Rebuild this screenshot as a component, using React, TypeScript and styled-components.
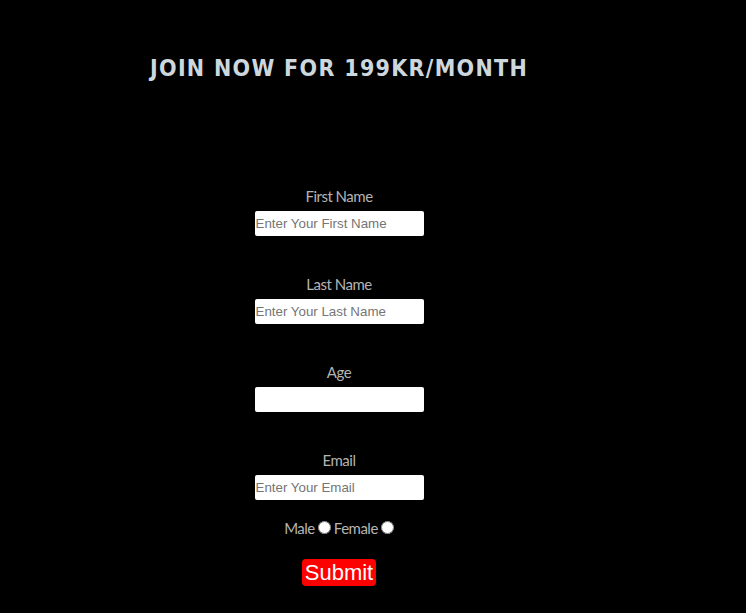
import styled, { createGlobalStyle } from "styled-components";

const GlobalStyle = createGlobalStyle`
    html, body {
        margin: 0;
        padding: 0;
        background: #000;
    }
    body {
        min-height: 613px;
        font-family: "Lato", "Roboto", sans-serif;
    }
`;

const Page = styled.div`
    width: 662px;
    margin-left: 8px;
    padding-top: 52px;
`;

const Title = styled.h1`
    margin: 0 0 0 142px;
    font-family: "DejaVu Sans Condensed", "DejaVu Sans", sans-serif;
    font-stretch: condensed;
    font-size: 23px;
    font-weight: bold;
    letter-spacing: 1.3px;
    line-height: 32px;
    color: #cdd8de;
`;

const Form = styled.form`
    display: flex;
    flex-direction: column;
    align-items: center;
    margin-top: 104px;
`;

const Field = styled.div<{ $last?: boolean }>`
    display: flex;
    flex-direction: column;
    align-items: center;
    margin-bottom: ${ p => p.$last ? '18px' : '40px' };
`;

const Label = styled.label`
    font-size: 15px;
    line-height: 17px;
    letter-spacing: -0.5px;
    color: #b4b4b4;
    margin-bottom: 6px;
`;

const TextInput = styled.input`
    box-sizing: border-box;
    width: 169px;
    height: 25px;
    margin: 0;
    padding: 0 1px;
    border: none;
    border-radius: 2px;
    background: #fff;
    font-family: "Liberation Sans", Arial, sans-serif;
    font-size: 13.33px;
    outline: none;

    &::placeholder {
        color: #757575;
    }
`;

const RadioRow = styled.div`
    display: flex;
    align-items: center;
    gap: 3px;
    font-size: 15px;
    letter-spacing: -0.5px;
    line-height: 20px;
    color: #b4b4b4;
`;

const Radio = styled.input`
    width: 13px;
    height: 13px;
    margin: 0 0 2px 0;
    accent-color: #fff;
`;

const SubmitBtn = styled.button`
    margin-top: 21px;
    padding: 0 3px;
    height: 27px;
    border: none;
    border-radius: 4px;
    background: #f00;
    color: #fff;
    font-family: "Liberation Sans", Arial, sans-serif;
    font-size: 22px;
    line-height: 27px;
    cursor: pointer;
`;

const App = () => {
    return (
        <>
            <GlobalStyle />
            <Page>
                <Title>JOIN NOW FOR 199KR/MONTH</Title>
                <Form onSubmit={ (e) => e.preventDefault() }>
                    <Field>
                        <Label>First Name</Label>
                        <TextInput placeholder='Enter Your First Name' />
                    </Field>
                    <Field>
                        <Label>Last Name</Label>
                        <TextInput placeholder='Enter Your Last Name' />
                    </Field>
                    <Field>
                        <Label>Age</Label>
                        <TextInput type='number' />
                    </Field>
                    <Field $last>
                        <Label>Email</Label>
                        <TextInput placeholder='Enter Your Email' />
                    </Field>
                    <RadioRow>
                        Male <Radio type='radio' name='gender' />
                        Female <Radio type='radio' name='gender' />
                    </RadioRow>
                    <SubmitBtn type='submit'>Submit</SubmitBtn>
                </Form>
            </Page>
        </>
    );
};

export default App;
